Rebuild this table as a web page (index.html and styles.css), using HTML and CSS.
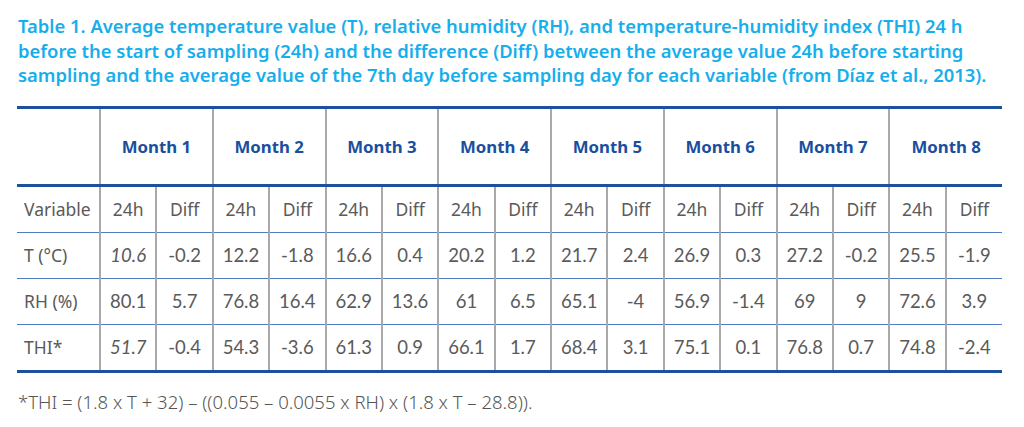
FILE: index.html
```html
<!DOCTYPE html>
<html>
<head>
<meta charset="utf-8">
<link rel="stylesheet" href="styles.css">
</head>
<body>
<div class="page">
  <h1 class="caption">Table 1. Average temperature value (T), relative humidity (RH), and temperature-humidity index (THI) 24 h<br>before the start of sampling (24h) and the difference (Diff) between the average value 24h before starting<br>sampling and the average value of the 7th day before sampling day for each variable (from Díaz et al., 2013).</h1>
  <table class="data">
    <colgroup>
      <col class="c-var">
      <col><col><col><col><col><col><col><col>
      <col><col><col><col><col><col><col><col>
    </colgroup>
    <thead>
      <tr class="months">
        <th class="first"></th>
        <th colspan="2">Month 1</th>
        <th colspan="2">Month 2</th>
        <th colspan="2">Month 3</th>
        <th colspan="2">Month 4</th>
        <th colspan="2">Month 5</th>
        <th colspan="2">Month 6</th>
        <th colspan="2">Month 7</th>
        <th colspan="2" class="last">Month 8</th>
      </tr>
    </thead>
    <tbody>
      <tr class="sub">
        <td class="first">Variable</td>
        <td>24h</td><td>Diff</td><td>24h</td><td>Diff</td><td>24h</td><td>Diff</td><td>24h</td><td>Diff</td>
        <td>24h</td><td>Diff</td><td>24h</td><td>Diff</td><td>24h</td><td>Diff</td><td>24h</td><td class="last">Diff</td>
      </tr>
      <tr>
        <td class="first">T (°C)</td>
        <td class="num it">10.6</td><td class="num">-0.2</td><td class="num">12.2</td><td class="num">-1.8</td><td class="num">16.6</td><td class="num">0.4</td><td class="num">20.2</td><td class="num">1.2</td>
        <td class="num">21.7</td><td class="num">2.4</td><td class="num">26.9</td><td class="num">0.3</td><td class="num">27.2</td><td class="num">-0.2</td><td class="num">25.5</td><td class="num last">-1.9</td>
      </tr>
      <tr>
        <td class="first">RH (%)</td>
        <td class="num">80.1</td><td class="num">5.7</td><td class="num">76.8</td><td class="num">16.4</td><td class="num">62.9</td><td class="num">13.6</td><td class="num">61</td><td class="num">6.5</td>
        <td class="num">65.1</td><td class="num">-4</td><td class="num">56.9</td><td class="num">-1.4</td><td class="num">69</td><td class="num">9</td><td class="num">72.6</td><td class="num last">3.9</td>
      </tr>
      <tr>
        <td class="first">THI*</td>
        <td class="num it">51.7</td><td class="num">-0.4</td><td class="num">54.3</td><td class="num">-3.6</td><td class="num">61.3</td><td class="num">0.9</td><td class="num">66.1</td><td class="num">1.7</td>
        <td class="num">68.4</td><td class="num">3.1</td><td class="num">75.1</td><td class="num">0.1</td><td class="num">76.8</td><td class="num">0.7</td><td class="num">74.8</td><td class="num last">-2.4</td>
      </tr>
    </tbody>
  </table>
  <p class="note">*THI = (1.8 x T + 32) – ((0.055 – 0.0055 x RH) x (1.8 x T – 28.8)).</p>
</div>
</body>
</html>
```

FILE: styles.css
```css
html, body {
  margin: 0;
  padding: 0;
  background: #ffffff;
}

.page {
  padding: 14px 22px 0 17px;
  font-family: "Noto Sans", "Open Sans", sans-serif;
  color: #595959;
}

.caption {
  margin: 0 0 0 1px;
  font-family: "Noto Sans", "Open Sans", sans-serif;
  font-weight: 600;
  font-size: 18.4px;
  line-height: 24.5px;
  color: #17aeec;
  white-space: nowrap;
}

.data {
  margin-top: 18px;
  width: 985px;
  border-collapse: collapse;
  table-layout: fixed;
  border-top: 3px solid #1d519e;
  border-bottom: 3px solid #1d519e;
}

.c-var {
  width: 83px;
}

.data th,
.data td {
  padding: 0;
  text-align: center;
  border-left: 2px solid #a9a9a9;
  border-right: 2px solid #a9a9a9;
}

.data .first {
  border-left: none;
  text-align: left;
  padding-left: 7px;
}

.data .last {
  border-right: none;
}

.months th {
  height: 75px;
  font-family: "Noto Sans", "Open Sans", sans-serif;
  font-weight: 700;
  font-size: 16.8px;
  color: #1a4f9e;
  border-bottom: 3px solid #1d519e;
}

.data tbody td {
  height: 45px;
  font-size: 17.5px;
  border-bottom: 1px solid #4f7cc2;
}

.data tbody tr:last-child td {
  border-bottom: none;
}

.sub td {
  font-family: "Noto Sans", "Open Sans", sans-serif;
  font-weight: 400;
  color: #5a5a5a;
}

.data .first {
  font-family: "Noto Sans", "Open Sans", sans-serif;
  color: #5a5a5a;
}

.num {
  font-family: Lato, "Noto Sans", sans-serif;
  color: #5a5a5a;
}

.data tbody td.num {
  font-size: 18.5px;
}

.it {
  font-style: italic;
}

.note {
  margin: 16px 0 0 1px;
  font-family: "Noto Sans", "Open Sans", sans-serif;
  font-weight: 300;
  font-size: 18.5px;
  color: #555555;
}
```
